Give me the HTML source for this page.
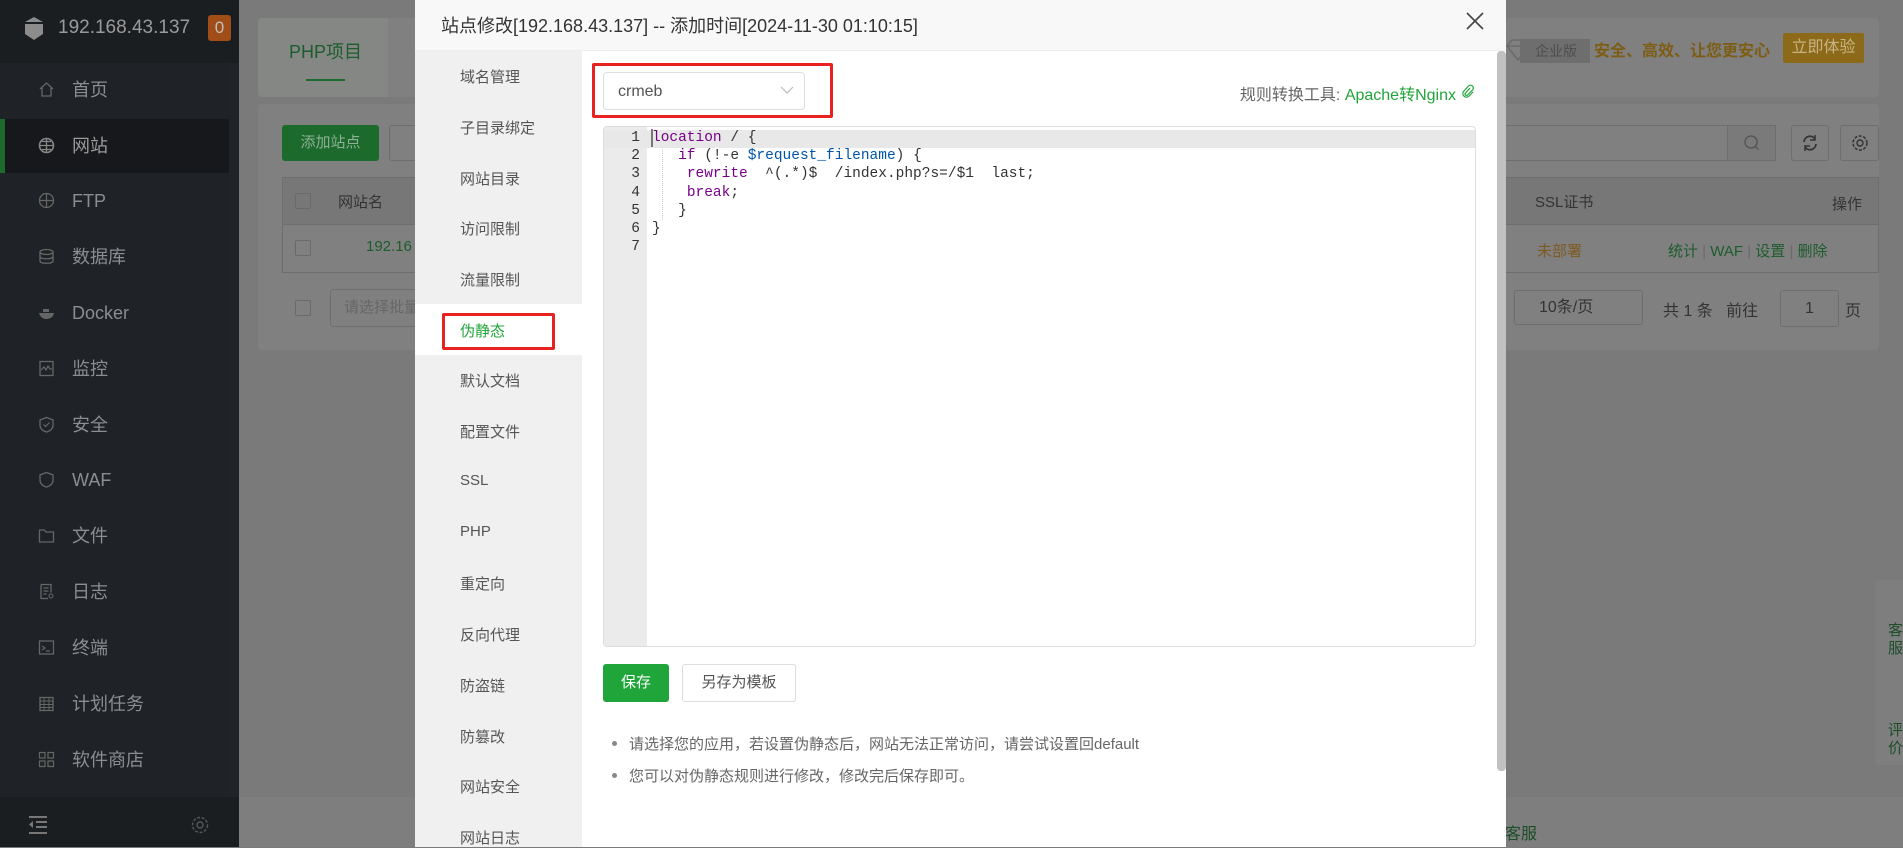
<!DOCTYPE html>
<html><head><meta charset="utf-8"><style>
*{box-sizing:border-box;margin:0;padding:0}
body{width:1903px;height:847px;overflow:hidden;position:relative;background:#7a7a7a;font-family:"Liberation Sans","Noto Sans CJK SC",sans-serif}
.a{position:absolute;white-space:nowrap}
#sb{left:0;top:0;width:239px;height:847px;background:#1f2226}
.mi{position:absolute;left:0;width:239px;height:54px;color:#8a8d91;font-size:18px;line-height:54px;padding-left:72px}
.mi svg{position:absolute;left:38px;top:18px}
.card{background:#808080;border-radius:4px}
.nav{position:absolute;left:460px;color:#555;font-size:15px}
.code{font-family:"Liberation Mono",monospace;font-size:14.5px;line-height:18.2px;color:#333}
.code .a{white-space:pre}
.k{color:#708}.v{color:#05a}
.ln{position:absolute;left:603px;width:37px;text-align:right;color:#333}
</style></head><body>
<!-- sidebar -->
<div class="a" id="sb">
 <div class="a" style="left:0;top:0;width:239px;height:63px;background:#1b1e21"></div>
 <svg class="a" style="left:22px;top:14px" width="24" height="28" viewBox="0 0 24 28"><path d="M3 8 L12 3 L21 8 L21 20 L12 26 L3 20Z" fill="#8c8c8c"/><path d="M2 9h20" stroke="#1b1e21" stroke-width="2"/></svg>
 <div class="a" style="left:58px;top:17px;color:#9a9a9a;font-size:19px">192.168.43.137</div>
 <div class="a" style="left:208px;top:15px;width:23px;height:26px;background:#a04d18;border-radius:3px;color:#c0c0c0;font-size:17px;text-align:center;line-height:26px">0</div>
 <div class="a" style="left:0;top:119px;width:229px;height:54px;background:#16181b"></div>
 <div class="a" style="left:0;top:119px;width:5px;height:54px;background:#1c6a2c"></div>
 <div class="a" style="left:229px;top:63px;width:10px;height:734px;background:#202327"></div>
 <div class="mi" style="top:63px">首页<svg width="17" height="17" viewBox="0 0 17 17"><path d="M2 8 L8.5 2 L15 8 M4 7v8h9V7" fill="none" stroke="#666" stroke-width="1.3"/></svg></div>
 <div class="mi" style="top:119px;color:#9a9a9a">网站<svg width="17" height="17" viewBox="0 0 17 17"><circle cx="8.5" cy="8.5" r="7" fill="none" stroke="#888" stroke-width="1.6"/><path d="M1.5 8.5h14M8.5 1.5v14M4 4.5h9M4 12.5h9" stroke="#888" stroke-width="1.3"/></svg></div>
 <div class="mi" style="top:174px">FTP<svg width="17" height="17" viewBox="0 0 17 17"><circle cx="8.5" cy="8.5" r="7" fill="none" stroke="#666" stroke-width="1.3"/><path d="M1.5 8.5h14M8.5 1.5v14" stroke="#666" stroke-width="1.2"/></svg></div>
 <div class="mi" style="top:230px">数据库<svg width="17" height="17" viewBox="0 0 17 17"><ellipse cx="8.5" cy="4" rx="6.5" ry="2.5" fill="none" stroke="#666" stroke-width="1.3"/><path d="M2 4v9c0 3 13 3 13 0V4M2 8.5c0 3 13 3 13 0" fill="none" stroke="#666" stroke-width="1.3"/></svg></div>
 <div class="mi" style="top:286px">Docker<svg width="17" height="17" viewBox="0 0 17 17"><path d="M1 9h15c-1 5-5 6-8 6S2 13 1 9z" fill="#666"/><rect x="5" y="5" width="6" height="3" fill="#666"/></svg></div>
 <div class="mi" style="top:342px">监控<svg width="17" height="17" viewBox="0 0 17 17"><rect x="2" y="1.5" width="13" height="14" fill="none" stroke="#666" stroke-width="1.3"/><path d="M3 10l3-3 2 3 2-4 2 3h2" fill="none" stroke="#666" stroke-width="1.2"/></svg></div>
 <div class="mi" style="top:398px">安全<svg width="17" height="17" viewBox="0 0 17 17"><path d="M8.5 1.5L15 4v5c0 4-3 6-6.5 7C5 15 2 13 2 9V4z" fill="none" stroke="#666" stroke-width="1.3"/><path d="M5.5 8.5l2 2 4-4" fill="none" stroke="#666" stroke-width="1.2"/></svg></div>
 <div class="mi" style="top:453px">WAF<svg width="17" height="17" viewBox="0 0 17 17"><path d="M8.5 1.5L15 4v5c0 4-3 6-6.5 7C5 15 2 13 2 9V4z" fill="none" stroke="#666" stroke-width="1.3"/></svg></div>
 <div class="mi" style="top:509px">文件<svg width="17" height="17" viewBox="0 0 17 17"><path d="M1.5 3h5l1.5 2h7.5v10h-14z" fill="none" stroke="#666" stroke-width="1.3"/></svg></div>
 <div class="mi" style="top:565px">日志<svg width="17" height="17" viewBox="0 0 17 17"><path d="M3 1.5h10v8M3 1.5v14h7M5.5 5h5M5.5 8h5M5.5 11h3" fill="none" stroke="#666" stroke-width="1.3"/><circle cx="13" cy="13" r="2" fill="none" stroke="#666"/></svg></div>
 <div class="mi" style="top:621px">终端<svg width="17" height="17" viewBox="0 0 17 17"><rect x="1.5" y="2" width="14" height="13" fill="none" stroke="#666" stroke-width="1.3"/><path d="M4 7l3 2-3 2M8 12h4" fill="none" stroke="#666" stroke-width="1.2"/></svg></div>
 <div class="mi" style="top:677px">计划任务<svg width="17" height="17" viewBox="0 0 17 17"><rect x="2" y="2.5" width="13" height="13" fill="none" stroke="#666" stroke-width="1.3"/><path d="M2 6h13M2 9.5h13M2 12.5h13M6 2.5v13M11 2.5v13" stroke="#666" stroke-width="0.9"/></svg></div>
 <div class="mi" style="top:733px">软件商店<svg width="17" height="17" viewBox="0 0 17 17"><path d="M1.5 1.5h5.5v5.5h-5.5zM10 1.5h5.5v5.5H10zM1.5 10h5.5v5.5h-5.5zM10 10h5.5v5.5H10z" fill="none" stroke="#666" stroke-width="1.2"/></svg></div>
 <div class="a" style="left:0;top:797px;width:239px;height:50px;background:#1b1e21"></div>
 <svg class="a" style="left:28px;top:816px" width="20" height="18" viewBox="0 0 20 18"><path d="M1 1h18M8 6h11M8 11h11M1 17h18" stroke="#777" stroke-width="2"/><path d="M5 5v7L1 8.5z" fill="#777"/></svg>
 <svg class="a" style="left:190px;top:815px" width="20" height="20" viewBox="0 0 20 20"><circle cx="10" cy="10" r="3" fill="none" stroke="#555" stroke-width="1.4"/><circle cx="10" cy="10" r="7.5" fill="none" stroke="#555" stroke-width="1.4" stroke-dasharray="3 1.6"/></svg>
</div>
<!-- background page -->
<div class="a card" style="left:258px;top:18px;width:1621px;height:79px"></div>
<div class="a" style="left:258px;top:18px;width:130px;height:79px;background:#848784;border-radius:4px 0 0 4px"></div>
<div class="a" style="left:289px;top:38px;color:#1d5c2c;font-size:18px">PHP项目</div>
<div class="a" style="left:306px;top:79px;width:39px;height:2px;background:#1d6a2c"></div>
<svg class="a" style="left:1505px;top:38px" width="26" height="24" viewBox="0 0 26 24"><path d="M2 8l5-6h12l5 6-11 14z M2 8h22" fill="none" stroke="#6a6a6a" stroke-width="1.6"/></svg>
<div class="a" style="left:1520px;top:39px;width:70px;height:24px;background:#6e6e6e;color:#4e4e4e;font-size:14px;line-height:24px;padding-left:15px">企业版</div>
<div class="a" style="left:1594px;top:37px;color:#7d5c14;font-size:16px;font-weight:bold">安全、高效、让您更安心</div>
<div class="a" style="left:1783px;top:33px;width:81px;height:30px;background:#8c6a1a;border-radius:2px;color:#c8b484;font-size:16px;line-height:30px;text-align:center">立即体验</div>
<div class="a card" style="left:258px;top:104px;width:1621px;height:246px"></div>
<div class="a" style="left:282px;top:125px;width:97px;height:36px;background:#1c6a2c;border-radius:3px;color:#8fb097;font-size:15px;line-height:36px;text-align:center">添加站点</div>
<div class="a" style="left:389px;top:125px;width:40px;height:36px;border:1px solid #6e6e6e;border-radius:3px"></div>
<div class="a" style="left:1500px;top:125px;width:276px;height:36px;border:1px solid #6e6e6e;border-radius:3px"></div>
<div class="a" style="left:1727px;top:125px;width:49px;height:36px;background:#7a7a7a;border:1px solid #6e6e6e"></div>
<svg class="a" style="left:1743px;top:134px" width="18" height="18"><circle cx="8" cy="8" r="6" fill="none" stroke="#555" stroke-width="1.4"/><path d="M12.5 12.5l3 3" stroke="#555" stroke-width="1.4"/></svg>
<div class="a" style="left:1791px;top:125px;width:38px;height:36px;border:1px solid #6e6e6e;border-radius:3px"></div>
<svg class="a" style="left:1800px;top:133px" width="20" height="20"><path d="M4 9a6 6 0 0 1 11-3M16 11a6 6 0 0 1-11 3" fill="none" stroke="#333" stroke-width="1.8"/><path d="M15 2v5h-5M5 18v-5h5" fill="none" stroke="#333" stroke-width="1.5"/></svg>
<div class="a" style="left:1840px;top:125px;width:39px;height:36px;border:1px solid #6e6e6e;border-radius:3px"></div>
<svg class="a" style="left:1850px;top:133px" width="20" height="20"><circle cx="10" cy="10" r="3" fill="none" stroke="#333" stroke-width="1.4"/><circle cx="10" cy="10" r="7" fill="none" stroke="#333" stroke-width="1.5" stroke-dasharray="3 1.5"/></svg>
<div class="a" style="left:282px;top:177px;width:1597px;height:48px;background:#777;border:1px solid #6e6e6e"></div>
<div class="a" style="left:282px;top:225px;width:1597px;height:48px;border:1px solid #6e6e6e;border-top:none"></div>
<div class="a" style="left:295px;top:193px;width:16px;height:16px;border:1px solid #6a6a6a;border-radius:2px"></div>
<div class="a" style="left:338px;top:191px;color:#333;font-size:15px">网站名</div>
<div class="a" style="left:295px;top:240px;width:16px;height:16px;border:1px solid #6a6a6a;border-radius:2px"></div>
<div class="a" style="left:366px;top:238px;color:#1d5c2c;font-size:15px">192.16</div>
<div class="a" style="left:1535px;top:191px;color:#333;font-size:15px">SSL证书</div>
<div class="a" style="left:1832px;top:193px;color:#333;font-size:15px">操作</div>
<div class="a" style="left:1537px;top:240px;color:#7d5a22;font-size:15px">未部署</div>
<div class="a" style="left:1668px;top:240px;color:#1d5c2c;font-size:15px">统计 <span style="color:#6a6a6a">|</span> WAF <span style="color:#6a6a6a">|</span> 设置 <span style="color:#6a6a6a">|</span> 删除</div>
<div class="a" style="left:295px;top:300px;width:16px;height:16px;border:1px solid #6a6a6a;border-radius:2px"></div>
<div class="a" style="left:330px;top:289px;width:100px;height:38px;border:1px solid #6e6e6e;border-radius:3px;color:#666;font-size:15px;line-height:36px;padding-left:13px">请选择批量</div>
<div class="a" style="left:1514px;top:290px;width:129px;height:35px;border:1px solid #6e6e6e;border-radius:3px;color:#333;font-size:16px;line-height:33px;padding-left:24px">10条/页</div>
<div class="a" style="left:1663px;top:297px;color:#333;font-size:16px">共 1 条&nbsp;&nbsp;&nbsp;前往</div>
<div class="a" style="left:1780px;top:290px;width:59px;height:37px;border:1px solid #6e6e6e;border-radius:3px;color:#333;font-size:16px;line-height:35px;text-align:center">1</div>
<div class="a" style="left:1845px;top:297px;color:#333;font-size:16px">页</div>
<div class="a" style="left:1875px;top:580px;width:28px;height:185px;background:#7e7e7e;border-radius:4px 0 0 4px"></div>
<div class="a" style="left:1888px;top:622px;color:#1d4e2a;font-size:15px;line-height:18px;width:15px;white-space:normal">客服</div>
<div class="a" style="left:1888px;top:722px;color:#1d4e2a;font-size:15px;line-height:18px;width:15px;white-space:normal">评价</div>
<div class="a" style="left:239px;top:797px;width:1664px;height:50px;background:#7e7e7e"></div>
<div class="a" style="left:1505px;top:820px;color:#1d4e2a;font-size:16px">客服</div>
<!-- modal -->
<div class="a" style="left:415px;top:0;width:1091px;height:847px;background:#fff"></div>
<div class="a" style="left:415px;top:0;width:1091px;height:51px;background:#f8f8f8;border-bottom:1px solid #eee"></div>
<div class="a" style="left:441px;top:12px;color:#333;font-size:18px">站点修改[192.168.43.137] -- 添加时间[2024-11-30 01:10:15]</div>
<svg class="a" style="left:1466px;top:12px" width="18" height="18"><path d="M1 1l16 16M17 1L1 17" stroke="#444" stroke-width="1.6"/></svg>
<div class="a" style="left:415px;top:51px;width:167px;height:796px;background:#f0f0f0"></div>
<div class="a" style="left:415px;top:304px;width:167px;height:51px;background:#fff"></div>
<div class="nav" style="top:66px">域名管理</div>
<div class="nav" style="top:117px">子目录绑定</div>
<div class="nav" style="top:168px">网站目录</div>
<div class="nav" style="top:218px">访问限制</div>
<div class="nav" style="top:269px">流量限制</div>
<div class="nav" style="top:320px;color:#20a53a">伪静态</div>
<div class="a" style="left:442px;top:313px;width:113px;height:37px;border:3px solid #e8221f;border-radius:2px"></div>
<div class="nav" style="top:370px">默认文档</div>
<div class="nav" style="top:421px">配置文件</div>
<div class="nav" style="top:472px">SSL</div>
<div class="nav" style="top:523px">PHP</div>
<div class="nav" style="top:573px">重定向</div>
<div class="nav" style="top:624px">反向代理</div>
<div class="nav" style="top:675px">防盗链</div>
<div class="nav" style="top:726px">防篡改</div>
<div class="nav" style="top:776px">网站安全</div>
<div class="nav" style="top:827px">网站日志</div>
<div class="a" style="left:592px;top:63px;width:241px;height:55px;border:3px solid #e8221f;border-radius:2px"></div>
<div class="a" style="left:603px;top:72px;width:202px;height:38px;border:1px solid #ddd;border-radius:4px;color:#555;font-size:16px;line-height:38px;padding-left:14px">crmeb</div>
<svg class="a" style="left:780px;top:85px" width="14" height="10"><path d="M1 2l6 6 6-6" fill="none" stroke="#bbb" stroke-width="1.2"/></svg>
<div class="a" style="right:447px;top:81px;color:#666;font-size:16px">规则转换工具: <span style="color:#20a53a">Apache转Nginx</span></div>
<svg class="a" style="left:1461px;top:84px" width="13" height="14" viewBox="0 0 13 14"><path d="M9 4L4.5 9a1.3 1.3 0 0 0 2 2L11.5 6a2.5 2.5 0 0 0-4-4L2.5 7.5a3.6 3.6 0 0 0 5 5L12 8" fill="none" stroke="#20a53a" stroke-width="1.2"/></svg>
<!-- editor -->
<div class="a" style="left:603px;top:126px;width:873px;height:521px;border:1px solid #ddd;border-radius:4px;overflow:hidden">
 <div class="a" style="left:0;top:0;width:43px;height:521px;background:#ebebeb"></div>
 <div class="a" style="left:0;top:3px;width:873px;height:18px;background:#e8e8e8"></div>
</div>
<div class="code">
 <div class="a" style="left:651px;top:129px;width:2px;height:18px;background:#777"></div>
 <div class="a" style="left:662px;top:147px;height:73px;border-left:1px dotted #ccc"></div>
 <div class="ln a" style="top:129px">1</div><div class="ln a" style="top:147px">2</div><div class="ln a" style="top:165px">3</div><div class="ln a" style="top:184px">4</div><div class="ln a" style="top:202px">5</div><div class="ln a" style="top:220px">6</div><div class="ln a" style="top:238px">7</div>
 <div class="a" style="left:652px;top:129px"><span class="k">location</span> / {</div>
 <div class="a" style="left:652px;top:147px">   <span class="k">if</span> (!-e <span class="v">$request_filename</span>) {</div>
 <div class="a" style="left:652px;top:165px">    <span class="k">rewrite</span>  ^(.*)$  /index.php?s=/$1  last;</div>
 <div class="a" style="left:652px;top:184px">    <span class="k">break</span>;</div>
 <div class="a" style="left:652px;top:202px">   }</div>
 <div class="a" style="left:652px;top:220px">}</div>
</div>
<div class="a" style="left:603px;top:664px;width:66px;height:38px;background:#20a53a;border-radius:3px;color:#fff;font-size:15px;line-height:38px;text-align:center">保存</div>
<div class="a" style="left:682px;top:664px;width:114px;height:38px;border:1px solid #ddd;border-radius:3px;color:#555;font-size:15px;line-height:36px;text-align:center">另存为模板</div>
<div class="a" style="left:612px;top:741px;width:5px;height:5px;border-radius:50%;background:#888"></div>
<div class="a" style="left:629px;top:733px;color:#666;font-size:15px">请选择您的应用，若设置伪静态后，网站无法正常访问，请尝试设置回default</div>
<div class="a" style="left:612px;top:773px;width:5px;height:5px;border-radius:50%;background:#888"></div>
<div class="a" style="left:629px;top:765px;color:#666;font-size:15px">您可以对伪静态规则进行修改，修改完后保存即可。</div>
<div class="a" style="left:1497px;top:51px;width:9px;height:720px;background:#c1c1c1;border-radius:4px"></div>
</body></html>
